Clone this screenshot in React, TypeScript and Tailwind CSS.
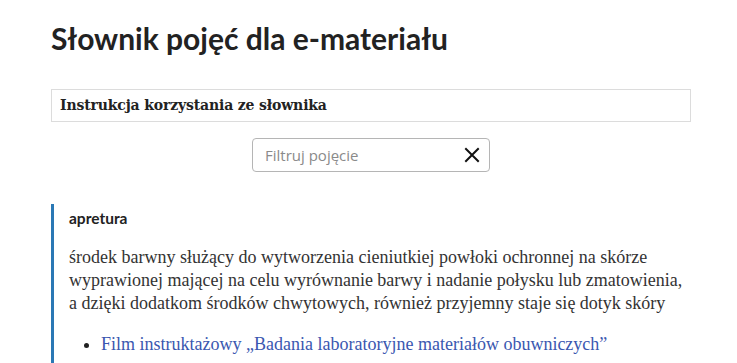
export default function App() {
  return (
    <div className="min-h-screen bg-white">
      <div className="w-[640px] ml-[51px] pt-[18px]">
        <h1 className="font-['Lato',sans-serif] font-bold text-[30px] leading-[40px] text-[#222]">
          Słownik pojęć dla e-materiału
        </h1>

        <div className="mt-[31px] h-[33px] border border-[#dcdcdc] flex items-center px-[8px]">
          <span className="font-['DejaVu_Serif',serif] font-bold text-[14px] tracking-[-0.15px] text-[#222]">
            Instrukcja korzystania ze słownika
          </span>
        </div>

        <div className="flex justify-center mt-[16px]">
          <div className="w-[238px] h-[34px] border border-[#b5b5b5] rounded-[4px] flex items-center pl-[12px] pr-[9px]">
            <span className="flex-1 font-['Open_Sans',sans-serif] text-[15px] text-[#8a8a8a]">
              Filtruj pojęcie
            </span>
            <svg width="16" height="16" viewBox="0 0 16 16" fill="none" stroke="#111" strokeWidth="2" strokeLinecap="square">
              <path d="M2 2 L14 14 M14 2 L2 14" />
            </svg>
          </div>
        </div>

        <div className="mt-[32px] border-l-[3px] border-[#2a78b5] pl-[15px] pt-[3px] pb-[10px]">
          <div className="font-['Lato',sans-serif] font-bold text-[15.5px] text-[#222] leading-[22px]">
            apretura
          </div>
          <p className="mt-[17px] font-['Liberation_Serif',serif] text-[18px] leading-[23px] text-[#333]">
            środek barwny służący do wytworzenia cieniutkiej powłoki ochronnej na skórze
            <br />
            wyprawionej mającej na celu wyrównanie barwy i nadanie połysku lub zmatowienia,
            <br />
            a dzięki dodatkom środków chwytowych, również przyjemny staje się dotyk skóry
          </p>
          <ul className="mt-[18px] list-disc pl-[32px] font-['Liberation_Serif',serif] text-[18px] leading-[23px] text-[#222]">
            <li>
              <a className="text-[#3a57b0]">Film instruktażowy „Badania laboratoryjne materiałów obuwniczych”</a>
            </li>
          </ul>
        </div>
      </div>
    </div>
  );
}
